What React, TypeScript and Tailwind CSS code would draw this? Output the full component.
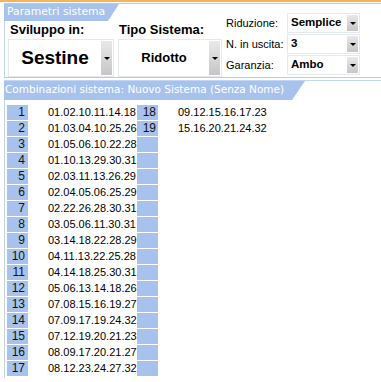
import React from "react";

const BLUE = "bg-[#a7c3ed]";

function Arrow() {
  return (
    <div className="w-0 h-0 border-l-[3px] border-r-[3px] border-t-[3px] border-l-transparent border-r-transparent border-t-black" />
  );
}

function BigSelect({ value, size, width }: { value: string; size: string; width: string }) {
  return (
    <div className={`flex h-[38px] ${width} border border-[#e4e9f1] bg-white`}>
      <div className={`flex-1 flex items-center justify-center font-bold text-black ${size}`}>{value}</div>
      <div className="w-[11px] my-[1px] mr-[1px] bg-linear-to-b from-[#e9e9e9] to-[#c6c6c6] flex items-center justify-center">
        <Arrow />
      </div>
    </div>
  );
}

function SmallSelect({ value }: { value: string }) {
  return (
    <div className="flex h-[20px] w-[73px] border border-[#e4e9f1] bg-white">
      <div className="flex-1 flex items-center pl-[3px] font-bold text-[11.5px] text-black">{value}</div>
      <div className="w-[11px] my-[1px] mr-[1px] bg-linear-to-b from-[#e9e9e9] to-[#c6c6c6] flex items-center justify-center">
        <Arrow />
      </div>
    </div>
  );
}

const rows: [number, string][] = [
  [1, "01.02.10.11.14.18"],
  [2, "01.03.04.10.25.26"],
  [3, "01.05.06.10.22.28"],
  [4, "01.10.13.29.30.31"],
  [5, "02.03.11.13.26.29"],
  [6, "02.04.05.06.25.29"],
  [7, "02.22.26.28.30.31"],
  [8, "03.05.06.11.30.31"],
  [9, "03.14.18.22.28.29"],
  [10, "04.11.13.22.25.28"],
  [11, "04.14.18.25.30.31"],
  [12, "05.06.13.14.18.26"],
  [13, "07.08.15.16.19.27"],
  [14, "07.09.17.19.24.32"],
  [15, "07.12.19.20.21.23"],
  [16, "08.09.17.20.21.27"],
  [17, "08.12.23.24.27.32"],
];
const second: [number, string][] = [
  [18, "09.12.15.16.17.23"],
  [19, "15.16.20.21.24.32"],
];

export default function App() {
  const mono = { fontFamily: "'Liberation Sans', Arial, sans-serif" };
  return (
    <div className="w-[381px] h-[382px] bg-white overflow-hidden" style={mono}>
      <div className="h-[2px] bg-[#f6b45a]" />
      {/* Panel 1 */}
      <div className="mt-[1px] ml-[4px] h-[75px] flex border-t border-b border-[#b3cbee] relative">
        <div className="flex flex-col">
          <div className="flex">
            <div
              className={`h-[17px] w-[115px] ${BLUE} text-white text-[10.8px] pl-[3px] flex items-center [clip-path:polygon(0_0,100%_0,calc(100%-11px)_100%,0_100%)]`}
              style={{ fontFamily: "'DejaVu Sans', Verdana, sans-serif" }}
            >
              Parametri sistema
            </div>
          </div>
          <div className="flex-1 border-l border-[#c3d6f1] pl-[3px] pt-[1px] flex gap-[4px]">
            <div className="flex flex-col">
              <div className="text-[13px] font-bold text-black leading-[15px] pl-[2px] h-[16px]">Sviluppo in:</div>
              <div className="mt-[1px]">
                <BigSelect value="Sestine" size="text-[19px]" width="w-[106px]" />
              </div>
            </div>
            <div className="flex flex-col">
              <div className="text-[13px] font-bold text-black leading-[15px] pl-[1px] h-[16px]">Tipo Sistema:</div>
              <div className="mt-[1px]">
                <BigSelect value="Ridotto" size="text-[13px]" width="w-[104px]" />
              </div>
            </div>
          </div>
        </div>
        <div className="flex flex-col gap-[1px] pt-[9px] ml-[4px]">
          {[
            ["Riduzione:", "Semplice"],
            ["N. in uscita:", "3"],
            ["Garanzia:", "Ambo"],
          ].map(([l, v]) => (
            <div key={l} className="flex items-center">
              <div className="w-[61px] text-[11px] text-black">{l}</div>
              <SmallSelect value={v} />
            </div>
          ))}
        </div>
      </div>
      {/* Panel 2 */}
      <div className="mt-[2px] ml-[4px] border-t border-[#c3d6f1]">
        <div
          className={`h-[19px] w-[301px] ${BLUE} text-white text-[10.5px] pl-[1px] flex items-end pb-[2px] [clip-path:polygon(0_0,100%_0,calc(100%-13px)_100%,0_100%)]`}
          style={{ fontFamily: "'DejaVu Sans', Verdana, sans-serif" }}
        >
          Combinazioni sistema: Nuovo Sistema (Senza Nome)
        </div>
        <div className="border-l border-[#c3d6f1] pl-[2px] pt-[5px] pb-[2px] grid grid-cols-[21px_109px_21px_1fr] gap-y-[1px]">
          {rows.map(([n, c], i) => {
            const s = second[i];
            return (
              <React.Fragment key={n}>
                <div className={`h-[15px] ${BLUE} text-[12px] leading-[15px] text-right pr-[3px] text-[#111]`}>{n}</div>
                <div className="h-[15px] text-[11px] leading-[15px] pl-[20px] text-black">{c}</div>
                <div className={`h-[15px] ${BLUE} text-[12px] leading-[15px] text-right pr-[2px] text-[#111]`}>{s ? s[0] : ""}</div>
                <div className="h-[15px] text-[11px] leading-[15px] pl-[20px] text-black">{s ? s[1] : ""}</div>
              </React.Fragment>
            );
          })}
        </div>
      </div>
    </div>
  );
}
